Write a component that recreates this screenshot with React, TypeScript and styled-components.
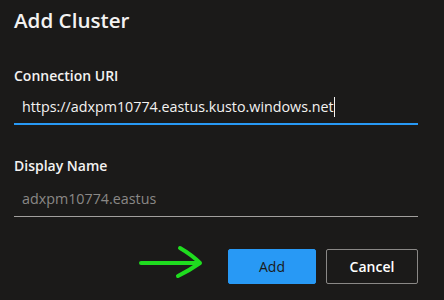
import { FC } from "react";
import styled, { createGlobalStyle } from "styled-components";

const GlobalStyle = createGlobalStyle`
  html, body {
    margin: 0;
    padding: 0;
    background-color: #1b1a19;
  }

  body {
    font-family: "Open Sans", "Noto Sans", sans-serif;
    color: #f3f2f1;
  }
`;

const App: FC = () => {
  return (
    <>
      <GlobalStyle />
      <Dialog>
        <Title>Add Cluster</Title>
        <Field>
          <Label>Connection URI</Label>
          <InputBox $active>
            <InputText>https://adxpm10774.eastus.kusto.windows.net</InputText>
            <Caret />
          </InputBox>
        </Field>
        <Field>
          <Label>Display Name</Label>
          <InputBox>
            <InputText $placeholder>adxpm10774.eastus</InputText>
          </InputBox>
        </Field>
        <Footer>
          <Arrow width="66" height="34" viewBox="0 0 66 34">
            <path
              d="M3 18 H61 M42 3 Q54 10 62 18 Q52 25 40 31"
              fill="none"
              stroke="#1fdc1f"
              strokeWidth="4"
              strokeLinecap="round"
              strokeLinejoin="round"
            />
          </Arrow>
          <PrimaryButton>Add</PrimaryButton>
          <DefaultButton>Cancel</DefaultButton>
        </Footer>
      </Dialog>
    </>
  );
};

const Dialog = styled.div`
  box-sizing: border-box;
  width: 444px;
  height: 300px;
  padding: 5px 26px 0 14px;
  display: flex;
  flex-direction: column;
`;

const Title = styled.h1`
  margin: 0;
  font-size: 20.6px;
  font-weight: 600;
  line-height: 30px;
  color: #f3f2f1;
`;

const Field = styled.div`
  display: flex;
  flex-direction: column;
  margin-top: 26px;
`;

const Label = styled.label`
  font-size: 14px;
  font-weight: 600;
  line-height: 20px;
  color: #f3f2f1;
  padding: 5px 0;
`;

const InputBox = styled.div<{ $active?: boolean }>`
  box-sizing: border-box;
  height: ${({ $active }) => ($active ? "34px" : "36px")};
  display: flex;
  align-items: center;
  padding: 0 8px;
  border-bottom: ${({ $active }) => ($active ? "2px solid #2899f5" : "1px solid #a19f9d")};
`;

const InputText = styled.span<{ $placeholder?: boolean }>`
  font-size: 14.3px;
  line-height: 20px;
  white-space: nowrap;
  color: ${({ $placeholder }) => ($placeholder ? "#8a8886" : "#f3f2f1")};
`;

const Caret = styled.span`
  width: 1px;
  height: 20px;
  background-color: #f3f2f1;
`;

const Footer = styled.div`
  display: flex;
  justify-content: flex-end;
  align-items: center;
  gap: 10px;
  margin-top: 32px;
`;

const Arrow = styled.svg`
  margin-right: 14px;
  margin-top: -10px;
`;

const ButtonBase = styled.button`
  box-sizing: border-box;
  height: 35px;
  padding: 0 20px;
  border-radius: 2px;
  font-family: "Open Sans", "Noto Sans", sans-serif;
  font-size: 14px;
  font-weight: 600;
  cursor: pointer;
`;

const PrimaryButton = styled(ButtonBase)`
  width: 88px;
  background-color: #2899f5;
  border: 1px solid #2899f5;
  color: #1b1a19;
  font-weight: 400;
`;

const DefaultButton = styled(ButtonBase)`
  width: 92px;
  background-color: #1b1a19;
  border: 1px solid #8a8886;
  color: #ffffff;
`;

export default App;
